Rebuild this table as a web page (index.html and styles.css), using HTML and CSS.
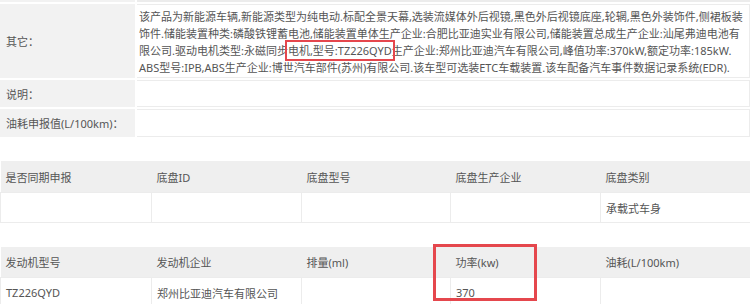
FILE: index.html
```html
<!DOCTYPE html>
<html lang="zh-CN">
<head>
<meta charset="utf-8">
<title>车辆参数</title>
<link rel="stylesheet" href="styles.css">
</head>
<body>
<div class="info">
  <div class="lab"></div><div class="val"></div>
  <div class="lab">其它：</div>
  <div class="val multi">该产品为新能源车辆,新能源类型为纯电动.标配全景天幕,选装流媒体外后视镜,黑色外后视镜底座,轮辋,黑色外装饰件,侧裙板装<br>饰件.储能装置种类:磷酸铁锂蓄电池,储能装置单体生产企业:合肥比亚迪实业有限公司,储能装置总成生产企业:汕尾弗迪电池有<br>限公司.驱动电机类型:永磁同步<span class="hl">电机,型号:TZ226QYD</span>生产企业:郑州比亚迪汽车有限公司,峰值功率:370kW,额定功率:185kW.<br>ABS型号:IPB,ABS生产企业:博世汽车部件(苏州)有限公司.该车型可选装ETC车载装置.该车配备汽车事件数据记录系统(EDR).</div>
  <div class="lab">说明：</div><div class="val"></div>
  <div class="lab">油耗申报值(L/100km)：</div><div class="val"></div>
</div>

<table class="grid">
  <colgroup><col class="c1"><col class="c2"><col class="c3"><col class="c4"><col class="c5"></colgroup>
  <thead>
    <tr><th>是否同期申报</th><th>底盘ID</th><th>底盘型号</th><th>底盘生产企业</th><th>底盘类别</th></tr>
  </thead>
  <tbody>
    <tr><td></td><td></td><td></td><td></td><td>承载式车身</td></tr>
  </tbody>
</table>

<div class="engine">
  <table class="grid">
    <colgroup><col class="c1"><col class="c2"><col class="c3"><col class="c4"><col class="c5"></colgroup>
    <thead>
      <tr><th>发动机型号</th><th>发动机企业</th><th>排量(ml)</th><th>功率(kw)</th><th>油耗(L/100km)</th></tr>
    </thead>
    <tbody>
      <tr><td>TZ226QYD</td><td>郑州比亚迪汽车有限公司</td><td></td><td>370</td><td></td></tr>
    </tbody>
  </table>
  <div class="mark"></div>
</div>
</body>
</html>
```
FILE: styles.css
```css
html, body {
  margin: 0;
  padding: 0;
  background: #fff;
}
body {
  width: 750px;
  font-family: "Noto Sans", "Noto Sans CJK SC", "Microsoft YaHei", sans-serif;
  font-size: 11px;
  color: #555;
  overflow: hidden;
}
.info {
  display: grid;
  grid-template-columns: 135px 1fr;
  grid-template-rows: 2px 74px 27px 28px;
  gap: 2px;
}
.info .lab {
  background: #f2f2f2;
  padding-left: 6px;
  display: flex;
  align-items: center;
}
.info .val {
  border: 1px solid #ececec;
  border-left: none;
  padding-left: 2px;
}
.info .multi {
  padding-top: 3px;
  line-height: 17px;
  white-space: nowrap;
}
.hl {
  outline: 2px solid #e5474d;
  outline-offset: 1px;
}
.grid {
  width: 750px;
  border-collapse: collapse;
  table-layout: fixed;
  margin-top: 24px;
}
.grid .c1 { width: 151px; }
.grid .c2 { width: 150px; }
.grid .c3 { width: 149px; }
.grid .c4 { width: 150px; }
.grid .c5 { width: 150px; }
.grid th {
  background: #efefef;
  height: 31px;
  padding: 0 0 0 5px;
  text-align: left;
  font-weight: normal;
}
.grid td {
  height: 29px;
  padding: 0 0 0 5px;
  border: 1px solid #ececec;
}
.engine {
  position: relative;
}
.engine .grid th {
  height: 30px;
}
.mark {
  position: absolute;
  left: 433px;
  top: -3px;
  width: 98px;
  height: 51px;
  border: 3px solid #e5474d;
}
```
